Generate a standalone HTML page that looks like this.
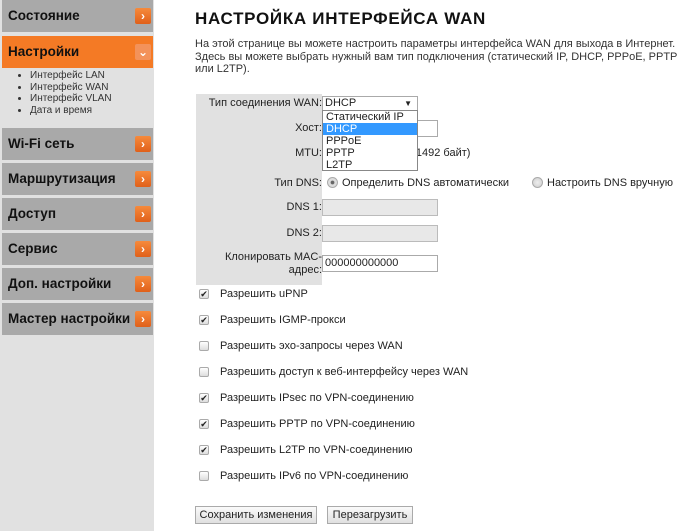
<!DOCTYPE html>
<html><head><meta charset="utf-8"><style>
*{margin:0;padding:0;box-sizing:border-box}
body{width:700px;height:531px;background:#fff;font-family:"Liberation Sans","DejaVu Sans",sans-serif;position:relative;overflow:hidden;color:#222}
.side{position:absolute;left:0;top:0;width:154px;height:531px;background:#e1e1e1}
.mi{position:absolute;left:2px;width:151px;height:32px;background:#a9a9a9;font-weight:bold;font-size:13.5px;line-height:32px;padding-left:6px;color:#111}
.mi.on{background:#f47a25}
.ic{position:absolute;right:2px;top:8px;width:16px;height:16px;border-radius:2px;background:linear-gradient(#f68a3c,#e0601a);color:#fff;font-size:12px;line-height:16px;text-align:center}
.sub{position:absolute;left:14px;top:70px;font-size:10px;line-height:11.5px;color:#333;list-style:disc;padding-left:16px}
.a{position:absolute;white-space:nowrap;font-size:11px}
.lab{position:absolute;right:378px;font-size:11px;white-space:nowrap;color:#222}
.inp{position:absolute;left:322px;width:116px;height:17px;border:1px solid #aaa;background:#fff;font-size:11px;line-height:15px;padding-left:2px}
.cb{position:absolute;left:199px;width:10px;height:10px;border:1px solid #aaa;border-radius:2px;background:linear-gradient(#fff,#ddd);font-size:9px;line-height:8px;text-align:center;color:#222}
.ct{position:absolute;left:220px;font-size:11px;white-space:nowrap}
.rad{position:absolute;width:11px;height:11px;border-radius:50%;border:1px solid #aaa;background:radial-gradient(#eee,#ccc)}
.btn{position:absolute;top:506px;height:18px;border:1px solid #aaa;background:linear-gradient(#fafafa,#e0e0e0);font-size:11px;line-height:16px;text-align:center}
</style></head><body>
<div class="side">
<div class="mi" style="top:0">Состояние<span class="ic">›</span></div>
<div class="mi on" style="top:36px">Настройки<span class="ic" style="background:#f3925a">⌄</span></div>
<ul class="sub"><li>Интерфейс LAN</li><li>Интерфейс WAN</li><li>Интерфейс VLAN</li><li>Дата и время</li></ul>
<div class="mi" style="top:128px">Wi-Fi сеть<span class="ic">›</span></div>
<div class="mi" style="top:163px">Маршрутизация<span class="ic">›</span></div>
<div class="mi" style="top:198px">Доступ<span class="ic">›</span></div>
<div class="mi" style="top:233px">Сервис<span class="ic">›</span></div>
<div class="mi" style="top:268px">Доп. настройки<span class="ic">›</span></div>
<div class="mi" style="top:303px">Мастер настройки<span class="ic">›</span></div>
</div>
<div class="a" style="left:195px;top:9px;font-size:17px;font-weight:bold;letter-spacing:0.7px;color:#111">НАСТРОЙКА ИНТЕРФЕЙСА WAN</div>
<div class="a" style="left:195px;top:38px;line-height:12.5px;font-size:11px;color:#333">На этой странице вы можете настроить параметры интерфейса WAN для выхода в Интернет.<br>Здесь вы можете выбрать нужный вам тип подключения (статический IP, DHCP, PPPoE, PPTP<br>или L2TP).</div>
<div style="position:absolute;left:196px;top:94px;width:126px;height:191px;background:#e1e1e1"></div>
<div class="lab" style="top:97px">Тип соединения WAN:</div>
<div class="lab" style="top:122px">Хост:</div>
<div class="lab" style="top:147px">MTU:</div>
<div class="lab" style="top:177px">Тип DNS:</div>
<div class="lab" style="top:201px">DNS 1:</div>
<div class="lab" style="top:227px">DNS 2:</div>
<div class="lab" style="top:251px;text-align:right;line-height:13px">Клонировать MAC-<br>адрес:</div>
<div class="inp" style="top:120px"></div>
<div class="a" style="left:400px;top:147px">00-1492 байт)</div>
<div class="inp" style="top:96px;width:96px;height:15px;font-size:11px;line-height:13px">DHCP<span style="position:absolute;right:5px;font-size:8px">▼</span></div>
<div style="position:absolute;left:322px;top:110px;width:96px;height:61px;border:1px solid #888;background:#fff;font-size:11px;line-height:12px;padding-top:0">
<div style="padding-left:3px">Статический IP</div><div style="padding-left:3px;background:#3399ff;color:#fff">DHCP</div><div style="padding-left:3px">PPPoE</div><div style="padding-left:3px">PPTP</div><div style="padding-left:3px">L2TP</div></div>
<div class="rad" style="left:327px;top:177px;background:radial-gradient(#666 25%,#ddd 35%)"></div>
<div class="a" style="left:342px;top:177px">Определить DNS автоматически</div>
<div class="rad" style="left:532px;top:177px"></div>
<div class="a" style="left:547px;top:177px">Настроить DNS вручную</div>
<div class="inp" style="top:199px;background:#e8e8e8;border-color:#bbb"></div>
<div class="inp" style="top:225px;background:#e8e8e8;border-color:#bbb"></div>
<div class="inp" style="top:255px">000000000000</div>
<div class="cb" style="top:289px">✔</div><div class="ct" style="top:288px">Разрешить uPNP</div>
<div class="cb" style="top:315px">✔</div><div class="ct" style="top:314px">Разрешить IGMP-прокси</div>
<div class="cb" style="top:341px"></div><div class="ct" style="top:340px">Разрешить эхо-запросы через WAN</div>
<div class="cb" style="top:367px"></div><div class="ct" style="top:366px">Разрешить доступ к веб-интерфейсу через WAN</div>
<div class="cb" style="top:393px">✔</div><div class="ct" style="top:392px">Разрешить IPsec по VPN-соединению</div>
<div class="cb" style="top:419px">✔</div><div class="ct" style="top:418px">Разрешить PPTP по VPN-соединению</div>
<div class="cb" style="top:445px">✔</div><div class="ct" style="top:444px">Разрешить L2TP по VPN-соединению</div>
<div class="cb" style="top:471px"></div><div class="ct" style="top:470px">Разрешить IPv6 по VPN-соединению</div>
<div class="btn" style="left:195px;width:122px">Сохранить изменения</div>
<div class="btn" style="left:327px;width:86px">Перезагрузить</div>
</body></html>
